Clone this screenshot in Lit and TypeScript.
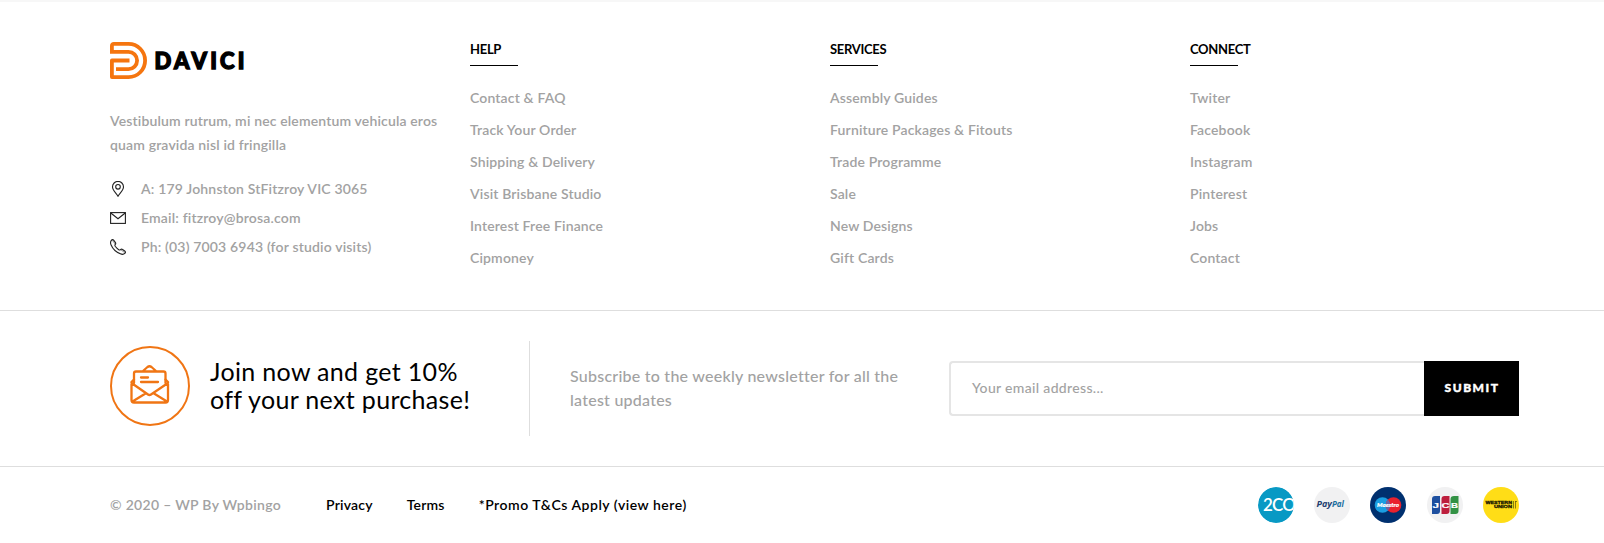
import { LitElement, html, css, svg } from "lit";
import { customElement } from "lit/decorators.js";

interface LinkGroup {
  title: string;
  links: string[];
}

const GROUPS: LinkGroup[] = [
  {
    title: "HELP",
    links: ["Contact & FAQ", "Track Your Order", "Shipping & Delivery", "Visit Brisbane Studio", "Interest Free Finance", "Cipmoney"],
  },
  {
    title: "SERVICES",
    links: ["Assembly Guides", "Furniture Packages & Fitouts", "Trade Programme", "Sale", "New Designs", "Gift Cards"],
  },
  {
    title: "CONNECT",
    links: ["Twiter", "Facebook", "Instagram", "Pinterest", "Jobs", "Contact"],
  },
];

const pin = svg`<path d="M8 15.200C6.600 12.400 2.500 9.300 2.500 5.900a5.500 5.500 0 0 1 11 0C13.500 9.300 9.400 12.400 8 15.200Z"/><circle cx="8" cy="5.800" r="2.300"/>`;
const mail = svg`<rect x=".6" y="2.600" width="14.800" height="10.800"/><path d="M.8 3 8 8.800 15.200 3"/>`;
const phone = svg`<path d="M1.200 1.600C2.100.4 3 .3 3.800 1.300L5.300 3.300c.7.9.6 1.500-.1 2.200-.5.600-.5 1 0 1.800 1 1.400 2.100 2.500 3.500 3.400.8.5 1.200.5 1.800-.1.700-.7 1.300-.7 2.100-.1l2.100 1.500c1 .8 1 1.600.1 2.400-1.200 1.200-2.600 1.200-4.500.4C6.300 13.200 2.800 9.900 1.100 6 .3 4.200.3 2.900 1.200 1.600Z"/><path d="m2.500 1.500 2.600 3.500M11 10.900l3.600 2.700" stroke-width=".5"/>`;

@customElement("app-root")
export class AppRoot extends LitElement {
  static styles = css`
    :host {
      display: block;
      height: 543px;
      box-sizing: border-box;
      border-top: 2px solid #f7f7f7;
      background: #fff;
      color: #a2a2a2;
      font: 600 14px/24px Lato, "Liberation Sans", sans-serif;
      overflow: hidden;
    }
    .wrap { padding: 0 85px 0 110px; }
    .top {
      display: grid;
      grid-template-columns: repeat(4, 360px);
      height: 308px;
      padding-right: 0;
      box-sizing: border-box;
      padding-top: 38px;
    }
    .logo { display: block; margin-top: 2px; }
    .wordmark { font: 900 22px Lato, sans-serif; fill: #000; stroke: #000; stroke-width: 1.4; }
    .about { margin: 29px 0 17px; letter-spacing: 0.15px; white-space: nowrap; }
    .contact { display: flex; align-items: center; gap: 15px; height: 29px; letter-spacing: 0.17px; white-space: nowrap; }
    .contact svg { fill: none; stroke: #222; stroke-width: 1.1; }
    h3 { margin: -1px 0 0; font: 700 13px/21px Lato, sans-serif; letter-spacing: -0.3px; color: #000; }
    h3::after { content: ""; display: block; width: 48px; height: 1px; background: #000; margin-top: 5px; }
    ul { list-style: none; margin: 16px 0 0; padding: 0; }
    li { height: 32px; line-height: 32px; letter-spacing: 0.15px; }
    .news {
      display: flex;
      align-items: center;
      height: 157px;
      box-sizing: border-box;
      border: solid #dedede;
      border-width: 1px 0;
    }
    .badge { flex: none; margin-top: -5px; }
    h2 { margin: -7px 0 0 20px; width: 319px; flex: none; font: 400 25px/28px Lato, sans-serif; letter-spacing: 0.33px; color: #000; white-space: nowrap; }
    .blurb { flex: none; box-sizing: border-box; width: 420px; height: 95px; padding: 23px 0 0 40px; border-left: 1px solid #dedede; font-size: 16px; font-weight: 500; letter-spacing: 0.24px; white-space: nowrap; }
    form { display: flex; flex: none; width: 570px; height: 55px; }
    .field { flex: 1; box-sizing: border-box; border: 2px solid #e5e5e5; border-right: 0; border-radius: 4px 0 0 4px; padding: 0 21px; line-height: 49px; font-weight: 500; letter-spacing: 0.33px; }
    button { width: 95px; border: 0; padding: 0 0 2px 1px; background: #000; color: #fff; font: 900 12px Lato, sans-serif; letter-spacing: 1.5px; -webkit-text-stroke: 0.4px #fff; }
    .bottom { display: flex; align-items: center; height: 76px; }
    .copy { width: 216px; letter-spacing: 0.3px; }
    nav { display: flex; gap: 34px; color: #000; font-weight: 600; white-space: nowrap; letter-spacing: 0.2px; }
    .promo { letter-spacing: 0.53px; }
    .cards { display: flex; gap: 20.3px; margin-left: auto; }
  `;

  private icon(shape: unknown) {
    return html`<svg width="16" height="16" viewBox="0 0 16 16">${shape}</svg>`;
  }

  private cards() {
    return html`<div class="cards">
      <svg width="36" height="36" viewBox="0 0 36 36">
        <defs><clipPath id="disc"><circle cx="18" cy="18" r="18"/></clipPath></defs>
        <g clip-path="url(#disc)"><circle cx="18" cy="18" r="18" fill="#0899c4"/>
        <text x="5" y="24" font-size="17" font-weight="600" fill="#fff" textLength="33">2CO</text></g>
      </svg>
      <svg width="36" height="36" viewBox="0 0 36 36">
        <circle cx="18" cy="18" r="18" fill="#f1f1f2"/>
        <g font-family="Open Sans" font-size="8.500" font-weight="700" font-style="italic">
          <text x="2.500" y="19.800" fill="#1f3f70" textLength="15.500" lengthAdjust="spacingAndGlyphs">Pay</text>
          <text x="18" y="19.800" fill="#1b6fa0" textLength="12" lengthAdjust="spacingAndGlyphs">Pal</text>
        </g>
      </svg>
      <svg width="36" height="36" viewBox="0 0 36 36">
        <circle cx="18" cy="18" r="18" fill="#00306f"/>
        <circle cx="12.500" cy="18" r="7.800" fill="#1a9ee2"/><circle cx="23.500" cy="18" r="7.800" fill="#e9212d"/>
        <path d="M18 12.500a7.800 7.800 0 0 1 0 11 7.800 7.800 0 0 1 0-11Z" fill="#6d63a5"/>
        <text x="7" y="20" font-size="6" font-weight="900" font-style="italic" fill="#fff" stroke="#fff" stroke-width=".2" textLength="22" lengthAdjust="spacingAndGlyphs">Maestro</text>
      </svg>
      <svg width="36" height="36" viewBox="0 0 36 36">
        <circle cx="18" cy="18" r="18" fill="#f1f1f2"/>
        <path d="M8 9h5v15q0 3-3 3H5V12q0-3 3-3Z" fill="#1d4f9f"/>
        <path d="M17.500 9h5v15q0 3-3 3h-5V12q0-3 3-3Z" fill="#bd1e3d"/>
        <path d="M27 9h4.500v15q0 3-3 3H23.500V12q0-3 3.500-3Z" fill="#329144"/>
        <g font-family="Liberation Sans" font-size="8" font-weight="700" fill="#fff" stroke="#fff" stroke-width=".2">
          <text x="5.500" y="21" textLength="6.500" lengthAdjust="spacingAndGlyphs">J</text>
          <text x="14.500" y="21" textLength="8" lengthAdjust="spacingAndGlyphs">C</text>
          <text x="24" y="21" textLength="7" lengthAdjust="spacingAndGlyphs">B</text>
        </g>
      </svg>
      <svg width="36" height="36" viewBox="0 0 36 36">
        <circle cx="18" cy="18" r="18" fill="#ffdd17"/>
        <g font-family="Liberation Sans" font-size="4.200" font-weight="700" fill="#1a1a00" stroke="#1a1a00" stroke-width=".3">
          <text x="2.500" y="17.400" textLength="26.500" lengthAdjust="spacingAndGlyphs">WESTERN</text>
          <text x="11" y="21.300" textLength="18" lengthAdjust="spacingAndGlyphs">UNION</text>
        </g>
        <path d="M30.500 14v7.500M32.500 14v7.500M32.500 14.500h1.500" stroke="#1a1a00" stroke-width=".5"/>
      </svg>
    </div>`;
  }

  render() {
    return html`
      <div class="wrap top">
        <div>
          <svg class="logo" width="140" height="38" viewBox="0 0 140 38">
            <g fill="none" stroke="#f5750f" stroke-width="3.800" stroke-linejoin="round">
              <path d="M1.900 9.900V3.900Q1.900 1.900 3.900 1.900H18.500a16.600 16.600 0 0 1 0 33.200H1.900V18.500H19.500"/>
              <path d="M0 9.900H18.500a8.600 8.600 0 0 1 0 17.200H6"/>
            </g>
            <text class="wordmark" x="44.500" y="26.500" textLength="90">DAVICI</text>
          </svg>
          <p class="about">Vestibulum rutrum, mi nec elementum vehicula eros<br />quam gravida nisl id fringilla</p>
          <div class="contact">${this.icon(pin)}<span>A: 179 Johnston StFitzroy VIC 3065</span></div>
          <div class="contact">${this.icon(mail)}<span>Email: fitzroy@brosa.com</span></div>
          <div class="contact">${this.icon(phone)}<span>Ph: (03) 7003 6943 (for studio visits)</span></div>
        </div>
        ${GROUPS.map((g) => html`<div><h3>${g.title}</h3><ul>${g.links.map((l) => html`<li>${l}</li>`)}</ul></div>`)}
      </div>
      <div class="wrap news">
        <svg class="badge" width="80" height="80" viewBox="0 0 80 80" fill="none" stroke="#f07514" stroke-width="2" stroke-linejoin="round" stroke-linecap="round">
          <circle cx="40" cy="40" r="39"/>
          <g stroke-width="2.300">
            <path d="M24 37V27.500q0-2 2-2H53.500q2 0 2 2V37M33 25l4.500-4q2-1.500 4 0L46 25M31 31.500h7M31 36h17"/>
            <path d="M24 33.500l-2.500 2.500V54q0 2.500 2.500 2.500H55.500q2.500 0 2.500-2.500V36l-2.500-2.500M21.500 37l16.500 11.500q1.500 1 3 0L58 37M22.500 55.500l13-8M57 55.500l-13-8"/>
          </g>
        </svg>
        <h2>Join now and get 10%<br />off your next purchase!</h2>
        <div class="blurb">Subscribe to the weekly newsletter for all the<br />latest updates</div>
        <form><div class="field">Your email address...</div><button type="button">SUBMIT</button></form>
      </div>
      <div class="wrap bottom">
        <span class="copy">© 2020 – WP By Wpbingo</span>
        <nav><span>Privacy</span><span>Terms</span><span class="promo">*Promo T&amp;Cs Apply (view here)</span></nav>
        ${this.cards()}
      </div>
    `;
  }
}
